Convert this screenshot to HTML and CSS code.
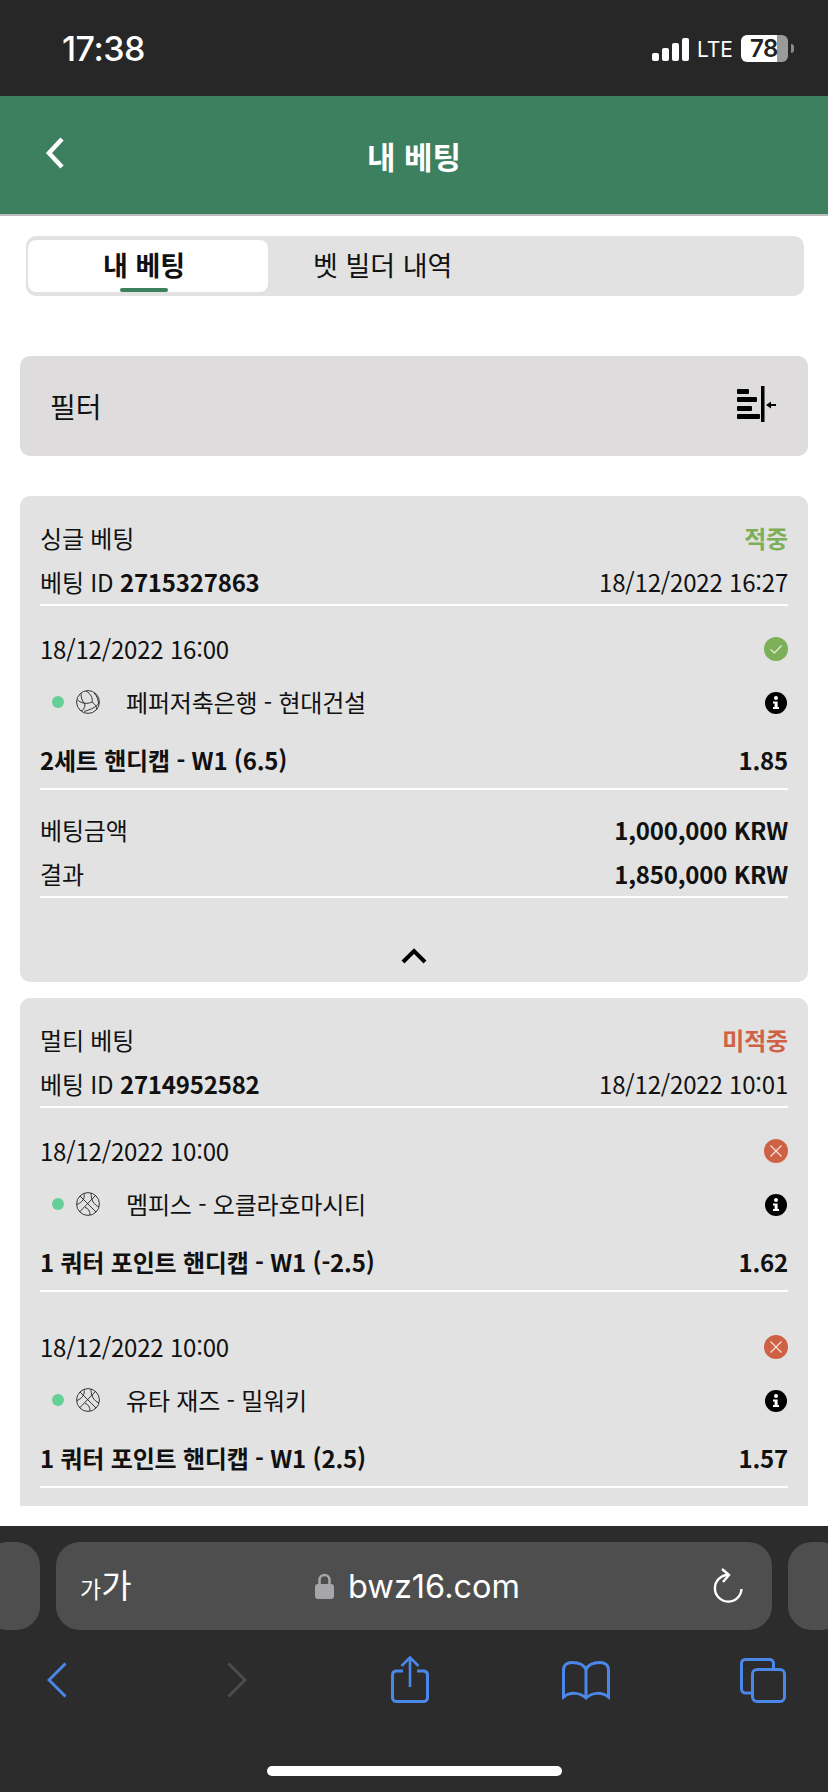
FILE: index.html
```html
<!doctype html>
<html lang="ko">
<head>
	<meta charset="UTF-8" />
	<title>내 베팅</title>
	<link rel="stylesheet" href="styles.css">
</head>
<body>
	<div class="page">
		<div class="statusbar">
			<span class="time">17:38</span>
			<div class="status-right">
				<div class="signal"><i class="b1"></i><i class="b2"></i><i class="b3"></i><i class="b4"></i></div>
				<span class="lte">LTE</span>
				<div class="battery"><span>78</span></div>
				<i class="nub"></i>
			</div>
		</div>

		<div class="header">
			<svg class="back" width="20" height="32" viewBox="0 0 20 32"><path d="M18 2 L5 16 L18 30" fill="none" stroke="#fff" stroke-width="4.5"/></svg>
			<h1>내 베팅</h1>
		</div>

		<div class="main">
			<div class="tabs">
				<div class="tab on">내 베팅<i></i></div>
				<div class="tab">벳 빌더 내역</div>
			</div>

			<div class="filter">
				<span>필터</span>
				<svg width="40" height="36" viewBox="0 0 40 36">
					<rect x="0" y="3" width="12" height="5" rx="1"/>
					<rect x="0" y="11" width="20" height="5" rx="1"/>
					<rect x="0" y="20" width="15" height="5" rx="1"/>
					<rect x="0" y="28" width="23" height="5" rx="1"/>
					<rect x="24" y="0" width="3.500" height="36"/>
					<path d="M31 19 L39 19" stroke="#000" stroke-width="2"/>
					<path d="M29 19 L34 15.500 L34 22.500 Z"/>
				</svg>
			</div>

			<div class="card">
				<div class="top">
					<div class="row"><span>싱글 베팅</span><b class="won">적중</b></div>
					<div class="row"><span>베팅 ID <b>2715327863</b></span><span>18/12/2022 16:27</span></div>
				</div>
				<div class="leg">
					<div class="row"><span>18/12/2022 16:00</span>
						<svg class="mark" width="24" height="24" viewBox="0 0 24 24"><circle cx="12" cy="12" r="12" fill="#7daf58"/><path d="M6.500 12.500 L10.500 16 L17.500 8.500" fill="none" stroke="#e8f0e0" stroke-width="1.200"/></svg>
					</div>
					<div class="row match">
						<div class="teams"><i class="dot"></i>
							<svg class="ball" width="24" height="24" viewBox="0 0 24 24"><circle cx="12" cy="12" r="11.400"/><path d="M10 1 C15 4 17 8 16 12 C12 14 6 14 1.500 10 M16 12 C19 14 21 17 21 19.500 M5 3.500 C5 8 6.500 12 9 14 C9 18 7 20.500 5 21 M18 3 C21 6 22.500 10 22.500 14 C19 18 13 20 8 21.500"/></svg>
							<span>페퍼저축은행 - 현대건설</span>
						</div>
						<svg class="info" width="22" height="22" viewBox="0 0 22 22"><circle cx="11" cy="11" r="11"/><circle cx="11" cy="6" r="2" fill="#fff"/><path d="M8 9.500 H12.600 V15 H14 V17 H8 V15 H9.600 V11.500 H8 Z" fill="#fff"/></svg>
					</div>
					<div class="row market"><b>2세트 핸디캡 - W1 (6.5)</b><b>1.85</b></div>
				</div>
				<div class="sum">
					<div class="row"><span>베팅금액</span><b>1,000,000 KRW</b></div>
					<div class="row"><span>결과</span><b>1,850,000 KRW</b></div>
				</div>
				<div class="fold">
					<svg width="26" height="16" viewBox="0 0 26 16"><path d="M2 14 L13 3 L24 14" fill="none" stroke="#000" stroke-width="4"/></svg>
				</div>
			</div>

			<div class="card open">
				<div class="top">
					<div class="row"><span>멀티 베팅</span><b class="lost">미적중</b></div>
					<div class="row"><span>베팅 ID <b>2714952582</b></span><span>18/12/2022 10:01</span></div>
				</div>
				<div class="leg">
					<div class="row"><span>18/12/2022 10:00</span>
						<svg class="mark" width="24" height="24" viewBox="0 0 24 24"><circle cx="12" cy="12" r="12" fill="#cf6144"/><path d="M6.500 6.500 L17.500 17.500 M17.500 6.500 L6.500 17.500" fill="none" stroke="#f5e3dd" stroke-width="1.200"/></svg>
					</div>
					<div class="row match">
						<div class="teams"><i class="dot"></i>
							<svg class="ball" width="24" height="24" viewBox="0 0 24 24"><circle cx="12" cy="12" r="11.400"/><path d="M4 4 L20 20 M19.500 3.500 L3.500 20 M8 1.500 C9 6 7 10 1 12.500 M15 1 C15 8 18 13 23 15 M9 15.500 C12 16 14 19 14 23"/></svg>
							<span>멤피스 - 오클라호마시티</span>
						</div>
						<svg class="info" width="22" height="22" viewBox="0 0 22 22"><circle cx="11" cy="11" r="11"/><circle cx="11" cy="6" r="2" fill="#fff"/><path d="M8 9.500 H12.600 V15 H14 V17 H8 V15 H9.600 V11.500 H8 Z" fill="#fff"/></svg>
					</div>
					<div class="row market"><b>1 쿼터 포인트 핸디캡 - W1 (-2.5)</b><b>1.62</b></div>
				</div>
				<div class="leg">
					<div class="row"><span>18/12/2022 10:00</span>
						<svg class="mark" width="24" height="24" viewBox="0 0 24 24"><circle cx="12" cy="12" r="12" fill="#cf6144"/><path d="M6.500 6.500 L17.500 17.500 M17.500 6.500 L6.500 17.500" fill="none" stroke="#f5e3dd" stroke-width="1.200"/></svg>
					</div>
					<div class="row match">
						<div class="teams"><i class="dot"></i>
							<svg class="ball" width="24" height="24" viewBox="0 0 24 24"><circle cx="12" cy="12" r="11.400"/><path d="M4 4 L20 20 M19.500 3.500 L3.500 20 M8 1.500 C9 6 7 10 1 12.500 M15 1 C15 8 18 13 23 15 M9 15.500 C12 16 14 19 14 23"/></svg>
							<span>유타 재즈 - 밀워키</span>
						</div>
						<svg class="info" width="22" height="22" viewBox="0 0 22 22"><circle cx="11" cy="11" r="11"/><circle cx="11" cy="6" r="2" fill="#fff"/><path d="M8 9.500 H12.600 V15 H14 V17 H8 V15 H9.600 V11.500 H8 Z" fill="#fff"/></svg>
					</div>
					<div class="row market"><b>1 쿼터 포인트 핸디캡 - W1 (2.5)</b><b>1.57</b></div>
				</div>
			</div>
		</div>

		<div class="safari">
			<div class="urlrow">
				<div class="pill side"></div>
				<div class="pill url">
					<span class="aa"><small>가</small>가</span>
					<div class="addr">
						<svg width="19" height="26" viewBox="0 0 19 26"><path d="M4.500 12 V7 A5 5 0 0 1 14.500 7 V12" fill="none" stroke="#a5a5aa" stroke-width="2.600"/><rect x="0" y="11" width="19" height="15" rx="3" fill="#a5a5aa"/></svg>
						<span>bwz16.com</span>
					</div>
					<svg class="reload" width="30" height="36" viewBox="0 0 30 36"><path d="M15 7 A13.300 13.300 0 1 0 28.500 21" fill="none" stroke="#fff" stroke-width="2.400"/><path d="M9 1 L16 7 L10 14" fill="none" stroke="#fff" stroke-width="2.400"/></svg>
				</div>
				<div class="pill side"></div>
			</div>
			<div class="tools">
				<svg class="t-back" width="20" height="36" viewBox="0 0 20 36"><path d="M18.500 1.500 L2 18 L18.500 34.500" fill="none" stroke="#4b87e8" stroke-width="3"/></svg>
				<svg class="t-next" width="20" height="36" viewBox="0 0 20 36"><path d="M1.500 1.500 L18 18 L1.500 34.500" fill="none" stroke="#4c4c4c" stroke-width="3"/></svg>
				<svg class="t-share" width="38" height="47" viewBox="0 0 38 47"><path d="M12 15 H5 A4 4 0 0 0 1.500 19 V41 A4 4 0 0 0 5 45.500 H33 A4 4 0 0 0 36.500 41 V19 A4 4 0 0 0 33 15 H26" fill="none" stroke="#4b87e8" stroke-width="3"/><path d="M19 31 V1.500 M10.500 10 L19 1.500 L27.500 10" fill="none" stroke="#4b87e8" stroke-width="2.600"/></svg>
				<svg class="t-book" width="48" height="39" viewBox="0 0 48 39"><path d="M24 9 C22 3 16 1.500 10 1.500 C5 1.500 1.500 4 1.500 9 V36 C8 31 18 31 24 37 C30 31 40 31 46.500 36 V9 C46.500 4 43 1.500 38 1.500 C32 1.500 26 3 24 9 V36" fill="none" stroke="#4b87e8" stroke-width="3"/></svg>
				<svg class="t-tabs" width="46" height="45" viewBox="0 0 46 45"><path d="M11 35 H6 A4 4 0 0 1 1.500 31 V6 A4 4 0 0 1 6 1.500 H29 A4 4 0 0 1 33.500 6 V10" fill="none" stroke="#4b87e8" stroke-width="3"/><rect x="12.500" y="11.500" width="32" height="32" rx="4.500" fill="none" stroke="#4b87e8" stroke-width="3"/></svg>
			</div>
			<div class="homebar"></div>
		</div>
	</div>
</body>
</html>
```

FILE: styles.css
```css
*{box-sizing: border-box;}
html,body{margin: 0;padding: 0;}
body{font-family: "Noto Sans CJK KR","Noto Sans",sans-serif;font-size: 24px;color: #111;background: #fff;}
h1{margin: 0;font-size: 31px;font-weight: 700;color: #fff;}

.page{width: 828px;height: 1792px;display: flex;flex-direction: column;overflow: hidden;}

/* status bar */
.statusbar{height: 96px;flex: none;background: #272727;display: flex;align-items: center;justify-content: space-between;padding: 0 34px 0 62px;color: #fff;}
.time{font-family: Inter,sans-serif;font-size: 34px;font-weight: 500;letter-spacing: -0.5px;}
.status-right{display: flex;align-items: center;}
.signal{display: flex;align-items: flex-end;gap: 3px;height: 23px;margin-top: 3px;}
.signal i{display: block;width: 7px;background: #fff;border-radius: 2px;}
.signal .b1{height: 8px;}
.signal .b2{height: 13px;}
.signal .b3{height: 18px;}
.signal .b4{height: 23px;}
.lte{font-family: Inter,sans-serif;font-size: 21px;margin: 2px 0 0 8px;color: #fff;}
.battery{width: 47px;height: 27px;margin: 1px 0 0 8px;border-radius: 6px;background: linear-gradient(to right,#fff 36px,#9a9a9a 36px);color: #222;font-family: Inter,sans-serif;font-weight: 600;font-size: 24px;line-height: 27px;padding-left: 9px;letter-spacing: -0.5px;}
.nub{display: block;width: 3px;height: 9px;margin: 1px 0 0 3px;background: #8a8a8a;border-radius: 0 3px 3px 0;}

/* green header */
.header{height: 120px;flex: none;background: #3d8060;border-bottom: 2px solid #bdbdbd;position: relative;display: flex;align-items: center;justify-content: center;}
.back{position: absolute;left: 44px;top: 41px;}

.main{flex: 1;min-height: 0;padding: 20px 20px 0;overflow: hidden;}

/* tabs */
.tabs{height: 60px;margin: 0 -4px 0 6px;width: 778px;padding: 4px 2px;background: #e2e2e2;border-radius: 10px;display: flex;}
.tab{font-size: 27px;line-height: 50px;padding-left: 45px;}
.tab.on{width: 240px;background: #fff;border-radius: 8px;font-weight: 700;padding-left: 75px;position: relative;}
.tab.on i{position: absolute;left: 92px;bottom: 0;width: 48px;height: 4px;background: #3d8060;border-radius: 2px;}

/* filter */
.filter{height: 100px;margin-top: 60px;background: #dedcdd;border-radius: 10px;display: flex;align-items: center;justify-content: space-between;padding: 0 31px 0 30px;font-size: 28px;}
.filter svg{display: block;margin-bottom: 5px;}

/* bet cards */
.card{margin-top: 40px;background: #e2e2e2;border-radius: 10px;padding: 21px 20px 0;letter-spacing: -0.2px;}
.card.open{margin-top: 16px;padding-bottom: 18px;border-radius: 10px 10px 0 0;}
.row{display: flex;align-items: center;justify-content: space-between;height: 44px;line-height: 40px;padding-bottom: 2px;white-space: nowrap;}
.row b{font-weight: 700;}
.won{color: #7daf58;}
.lost{color: #cf6144;}
.top{border-bottom: 2px solid #fff;height: 89px;}
.leg{padding: 22px 0 5px;border-bottom: 2px solid #fff;}
.leg + .leg{margin-top: 12px;}
.match{margin-top: 9px;}
.market{margin-top: 14px;}
.teams{display: flex;align-items: center;padding-left: 12px;}
.dot{display: block;width: 12px;height: 12px;border-radius: 50%;background: #65cf98;}
.ball{display: block;margin-left: 12px;fill: none;stroke: #222;stroke-width: 0.9;}
.teams span{margin-left: 26px;}
.mark,.info{display: block;}
.info{margin: 2px 1px 0 0;}
.sum{padding-top: 19px;border-bottom: 2px solid #fff;height: 108px;}
.fold{height: 84px;padding-top: 50px;display: flex;justify-content: center;}
.fold svg{display: block;}

/* safari bar */
.safari{height: 266px;flex: none;background: #2c2c2c;padding-top: 16px;position: relative;}
.urlrow{display: flex;gap: 16px;margin: 0 -16px;height: 88px;justify-content: center;}
.pill{background: #4e4e4e;border-radius: 24px;height: 88px;}
.pill.side{width: 56px;flex: none;}
.pill.url{width: 716px;flex: none;display: flex;align-items: center;padding: 0 29px 0 24px;position: relative;color: #fff;}
.aa{font-size: 33px;line-height: 40px;}
.aa small{font-size: 23px;}
.addr{position: absolute;left: 259px;top: 0;height: 88px;display: flex;align-items: center;gap: 14px;font-family: Inter,sans-serif;font-size: 32.5px;}
.reload{margin-left: auto;}
.tools{display: flex;align-items: flex-start;padding-left: 47px;height: 92px;margin-top: 26px;}
.tools svg{display: block;}
.t-back{margin-top: 6px;}
.t-next{margin: 6px 0 0 160px;}
.t-share{margin-left: 144px;}
.t-book{margin: 5px 0 0 133px;}
.t-tabs{margin: 2px 0 0 130px;}
.homebar{width: 295px;height: 10px;border-radius: 5px;background: #fff;position: absolute;left: 267px;top: 240px;}
```
